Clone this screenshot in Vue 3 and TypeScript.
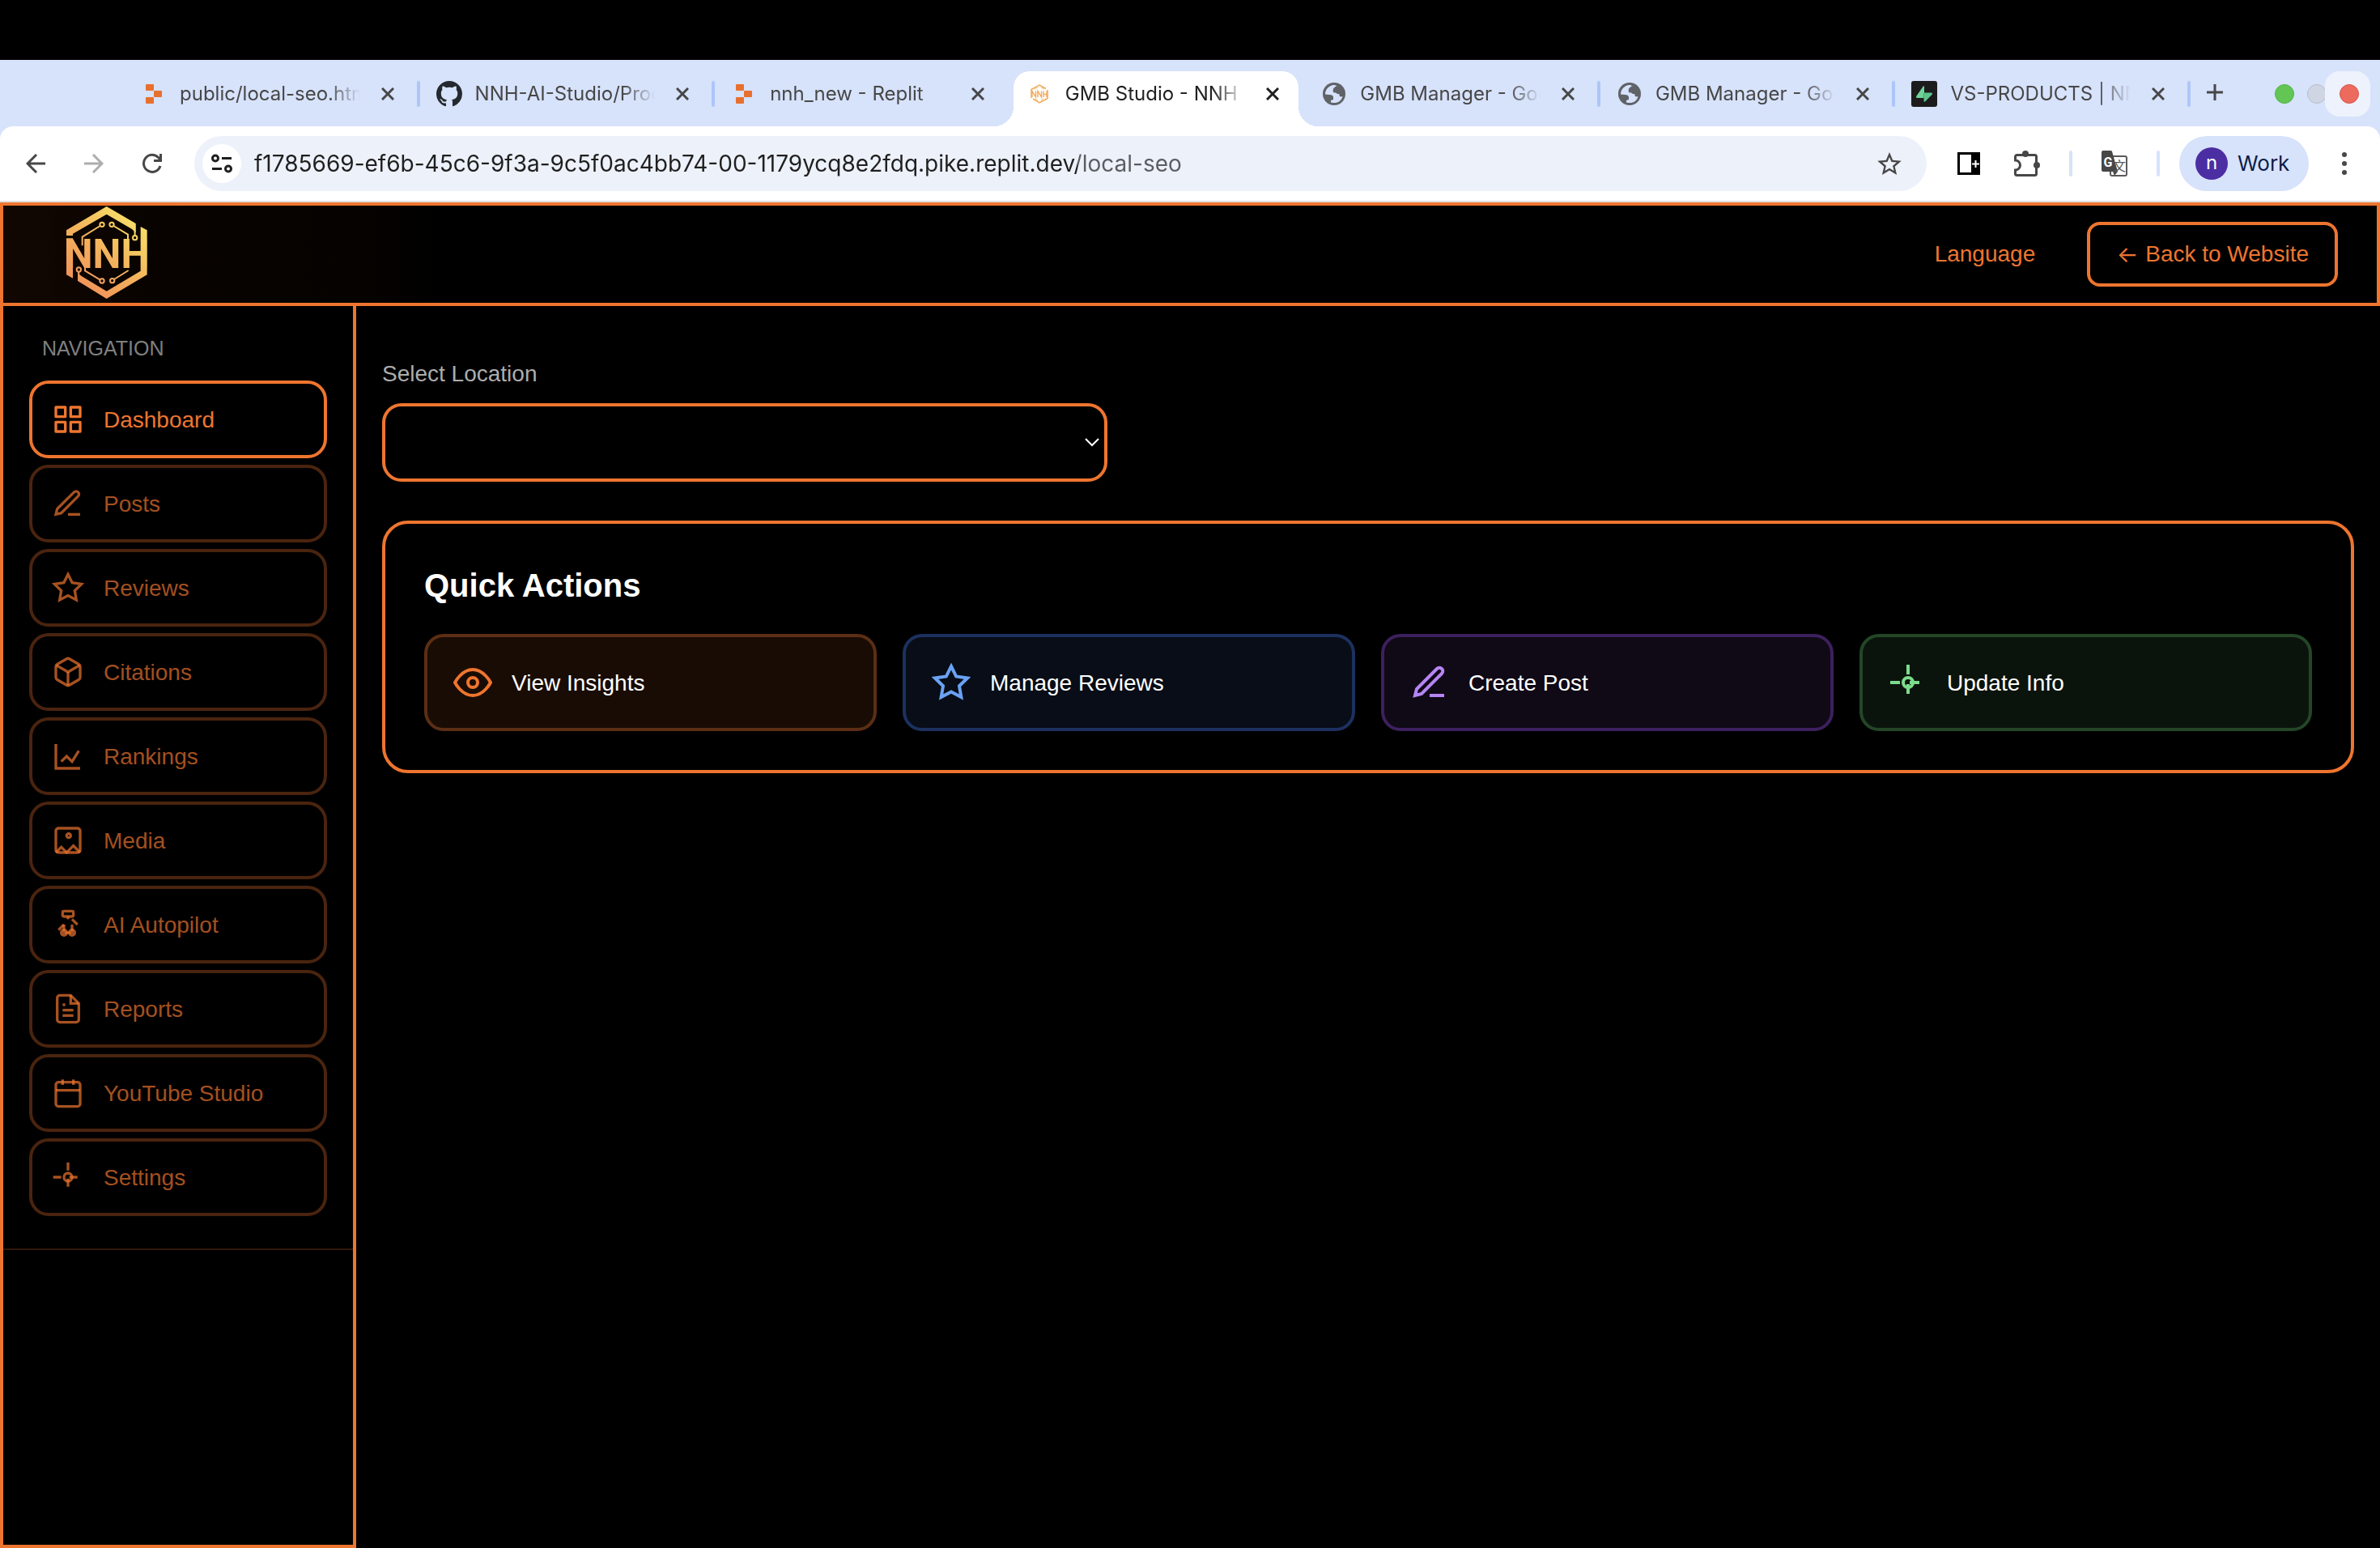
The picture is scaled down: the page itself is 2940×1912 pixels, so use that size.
<script setup lang="ts">
import { ref } from 'vue'

interface Tab {
  title: string
  icon: 'replit' | 'github' | 'nnh' | 'globe' | 'supabase'
  active?: boolean
}

interface NavItem {
  label: string
  paths: string[]
}

interface Action extends NavItem {
  tone: string
}

const tabs: Tab[] = [
  { title: 'public/local-seo.html', icon: 'replit' },
  { title: 'NNH-AI-Studio/Product', icon: 'github' },
  { title: 'nnh_new - Replit', icon: 'replit' },
  { title: 'GMB Studio - NNH Local', icon: 'nnh', active: true },
  { title: 'GMB Manager - Google', icon: 'globe' },
  { title: 'GMB Manager - Google', icon: 'globe' },
  { title: 'VS-PRODUCTS | NNH', icon: 'supabase' },
]

const star = ['M12 2l3.09 6.26L22 9.27l-5 4.87 1.18 6.88L12 17.77l-6.18 3.25L7 14.14 2 9.27l6.91-1.01L12 2z']
const pen = ['M12 20h9', 'M16.5 3.5a2.121 2.121 0 0 1 3 3L7 19l-4 1 1-4L16.5 3.5z']
const target = ['M12 9a3 3 0 1 0 0 6 3 3 0 1 0 0-6z', 'M12 1v6M12 13v6M1 12h6M13 12h6']

const navItems: NavItem[] = [
  {
    label: 'Dashboard',
    paths: ['M3 3h7v7H3z', 'M14 3h7v7h-7z', 'M14 14h7v7h-7z', 'M3 14h7v7H3z'],
  },
  { label: 'Posts', paths: pen },
  { label: 'Reviews', paths: star },
  {
    label: 'Citations',
    paths: [
      'M21 16V8a2 2 0 0 0-1-1.73l-7-4a2 2 0 0 0-2 0l-7 4A2 2 0 0 0 3 8v8a2 2 0 0 0 1 1.73l7 4a2 2 0 0 0 2 0l7-4A2 2 0 0 0 21 16z',
      'M3.27 6.96L12 12.01l8.73-5.05',
      'M12 22.08V12',
    ],
  },
  { label: 'Rankings', paths: ['M3 3v18h18', 'M7 16l4-4 4 4 5-8'] },
  {
    label: 'Media',
    paths: [
      'M5 3h14a2 2 0 0 1 2 2v14a2 2 0 0 1-2 2H5a2 2 0 0 1-2-2V5a2 2 0 0 1 2-2z',
      'M12.5 7a1.5 1.5 0 1 0 0 3 1.5 1.5 0 1 0 0-3z',
      'M21 21l-5-5-5 5-4-4-4 4',
    ],
  },
  {
    label: 'AI Autopilot',
    paths: [
      'M9 2h6a1 1 0 0 1 1 1v2a1 1 0 0 1-1 1H9a1 1 0 0 1-1-1V3a1 1 0 0 1 1-1z',
      'M12 6v2',
      'M15 8l4 4',
      'M9 12l-4 4',
      'M9 16a2 2 0 1 0 0 4 2 2 0 1 0 0-4z',
      'M15 16a2 2 0 1 0 0 4 2 2 0 1 0 0-4z',
      'M9 12v5M15 12v5',
      'M8 18h8',
    ],
  },
  {
    label: 'Reports',
    paths: [
      'M14 2H6a2 2 0 0 0-2 2v16a2 2 0 0 0 2 2h12a2 2 0 0 0 2-2V8z',
      'M14 2v6h6',
      'M16 13H8',
      'M16 17H8',
      'M10 9H8',
    ],
  },
  {
    label: 'YouTube Studio',
    paths: [
      'M5 4h14a2 2 0 0 1 2 2v14a2 2 0 0 1-2 2H5a2 2 0 0 1-2-2V6a2 2 0 0 1 2-2z',
      'M16 2v4',
      'M8 2v4',
      'M3 10h18',
    ],
  },
  { label: 'Settings', paths: target },
]

const actions: Action[] = [
  {
    label: 'View Insights',
    tone: 'orange',
    paths: ['M1 12s4-8 11-8 11 8 11 8-4 8-11 8-11-8-11-8z', 'M12 9a3 3 0 1 0 0 6 3 3 0 1 0 0-6z'],
  },
  { label: 'Manage Reviews', tone: 'blue', paths: star },
  { label: 'Create Post', tone: 'purple', paths: pen },
  { label: 'Update Info', tone: 'green', paths: target },
]

const current = ref('Dashboard')
const location = ref('')
const address = ref('f1785669-ef6b-45c6-9f3a-9c5f0ac4bb74-00-1179ycq8e2fdq.pike.replit.dev/local-seo')
</script>

<template>
  <div class="screen">
    <div class="notch-bar"></div>

    <div class="tab-strip">
      <div class="tabs">
        <div
          v-for="(tab, i) in tabs"
          :key="i"
          class="tab"
          :class="{ active: tab.active, divided: !tab.active && !tabs[i + 1]?.active }"
        >
          <span class="favicon">
            <svg v-if="tab.icon === 'replit'" width="20" height="24" viewBox="0 0 20 24" fill="#e8702f">
              <rect width="10" height="8" rx="1" />
              <rect x="10" y="8" width="10" height="8" rx="1" />
              <rect y="16" width="10" height="8" rx="1" />
            </svg>
            <svg v-else-if="tab.icon === 'github'" width="32" height="32" viewBox="0 0 16 16" fill="#24292f">
              <path
                d="M8 0C3.58 0 0 3.58 0 8c0 3.54 2.29 6.53 5.47 7.59.4.07.55-.17.55-.38 0-.19-.01-.82-.01-1.49-2.01.37-2.53-.49-2.69-.94-.09-.23-.48-.94-.82-1.13-.28-.15-.68-.52-.01-.53.63-.01 1.08.58 1.23.82.72 1.21 1.87.87 2.33.66.07-.52.28-.87.51-1.07-1.78-.2-3.64-.89-3.64-3.95 0-.87.31-1.59.82-2.15-.08-.2-.36-1.02.08-2.12 0 0 .67-.21 2.2.82.64-.18 1.32-.27 2-.27s1.36.09 2 .27c1.53-1.04 2.2-.82 2.2-.82.44 1.1.16 1.92.08 2.12.51.56.82 1.27.82 2.15 0 3.07-1.87 3.75-3.65 3.95.29.25.54.73.54 1.48 0 1.07-.01 1.93-.01 2.2 0 .21.15.46.55.38A8.01 8.01 0 0 0 16 8c0-4.42-3.58-8-8-8z"
              />
            </svg>
            <svg v-else-if="tab.icon === 'nnh'" width="22" height="24" viewBox="0 0 22 24" fill="none" stroke="#f2a95a">
              <path d="M1 8V6.500L11 1l8 4.500M21 7v10.500L11 23l-8-5M1 8v9" stroke-width="1.500" />
              <path d="M5 6l4-2M13 4l4 2M6 18l3 2M13 20l3-2" stroke="#f4c25c" />
              <path d="M2 16V8.500L6.500 16V8.500M9 16V8.500l4.500 7.500V8.500M16 16V8.500M16 12.500h4M20 16V8.500" stroke-width="1.400" />
            </svg>
            <svg v-else-if="tab.icon === 'globe'" width="28" height="28" viewBox="0 0 28 28">
              <circle cx="14" cy="14" r="14" fill="#5f6368" />
              <path
                d="M13 3C7 4 3 9 3 14.500L8 15c3 0 5 1 5 3v3l-3 1v2.500c7 2 13-1 14.500-7.500-2 1-4 .5-4-1.500s-1-3-3-3h-3c-2 0-2.500-3-.5-4h2.500c1.500 0 1-3 2.500-3.500C16 3 14.500 2.800 13 3z"
                fill="#d6e2fb"
              />
              <path d="M17 4c-2 2-5 3-4 6 3 0 3 3 5 4h7c0-5-4-9-8-10z" fill="#5f6368" />
            </svg>
            <svg v-else width="32" height="32" viewBox="0 0 32 32">
              <rect width="32" height="32" rx="3" fill="#1c1c1c" />
              <path d="M16 7v8.500h-.5v5.500H7.500c-1.500 0-2-1.200-1.200-2.200L14.800 6.600c.5-.6 1.200-.4 1.200.4z" fill="#6fd397" />
              <path d="M15.500 14.500h9c1.500 0 2 1.200 1.200 2.200L17 25.500c-.6.6-1.500.3-1.500-.5z" fill="#5cc48a" />
            </svg>
          </span>
          <span class="tab-title">{{ tab.title }}</span>
          <button class="tab-close" type="button" aria-label="Close tab">
            <svg width="16" height="16" viewBox="0 0 16 16" fill="none" stroke="currentColor" stroke-width="3">
              <path d="M1 1l14 14M15 1L1 15" />
            </svg>
          </button>
        </div>
      </div>
      <button class="new-tab" type="button" aria-label="New tab">
        <svg width="20" height="20" viewBox="0 0 20 20" stroke="#474747" stroke-width="3">
          <path d="M10 0v20M0 10h20" />
        </svg>
      </button>
      <div class="window-buttons">
        <button class="light green" type="button" aria-label="Zoom"></button>
        <button class="light grey" type="button" aria-label="Minimize"></button>
        <span class="light-hover">
          <button class="light red" type="button" aria-label="Close"></button>
        </span>
      </div>
    </div>

    <div class="toolbar-wrap">
      <div class="toolbar">
        <button class="tool" type="button" aria-label="Back">
          <svg width="24" height="24" viewBox="0 0 24 24" fill="none" stroke="#474747" stroke-width="3">
            <path d="M24 12H2M13 1L2 12l11 11" />
          </svg>
        </button>
        <button class="tool" type="button" aria-label="Forward">
          <svg width="24" height="24" viewBox="0 0 24 24" fill="none" stroke="#adadad" stroke-width="3">
            <path d="M0 12h22M11 1l11 11-11 11" />
          </svg>
        </button>
        <button class="tool" type="button" aria-label="Reload">
          <svg width="26" height="26" viewBox="0 0 26 26" fill="none" stroke="#474747" stroke-width="3">
            <path d="M23 16a10.500 10.500 0 1 1-2.500-10.500L23 8M23.500 1v8.500H15" />
          </svg>
        </button>
        <div class="omnibox">
          <button class="site-info" type="button" aria-label="Site information">
            <svg width="26" height="24" viewBox="0 0 26 24" fill="none" stroke="#1f1f1f" stroke-width="3">
              <circle cx="5" cy="5.500" r="3.500" />
              <path d="M13 5.500h12M1 18.500h12" />
              <circle cx="21" cy="18.500" r="3.500" />
            </svg>
          </button>
          <input v-model="address" class="address" type="text" aria-label="Address" spellcheck="false" />
          <button class="tool bookmark" type="button" aria-label="Bookmark">
            <svg width="30" height="28" viewBox="2 2 20 19" fill="#474747">
              <path
                d="M22 9.240l-7.190-.62L12 2 9.190 8.630 2 9.240l5.460 4.730L5.820 21 12 17.270 18.180 21l-1.630-7.030L22 9.240zM12 15.400l-3.760 2.270 1-4.280-3.320-2.880 4.380-.38L12 6.100l1.710 4.040 4.380.38-3.320 2.880 1 4.280L12 15.400z"
              />
            </svg>
          </button>
        </div>
        <div class="extensions">
          <button class="tool" type="button" aria-label="Side panel">
            <svg width="28" height="28" viewBox="0 0 28 28">
              <rect width="28" height="28" fill="#000" />
              <rect x="3" y="3" width="14" height="22" fill="#fff" />
              <path d="M22.500 10v9M18 14.500h9" stroke="#fff" stroke-width="2" />
            </svg>
          </button>
          <button class="tool" type="button" aria-label="Extensions">
            <svg width="32" height="32" viewBox="0 0 32 32">
              <path
                d="M1.500 12V7.500a2 2 0 0 1 2-2h22a2 2 0 0 1 2 2v21a2 2 0 0 1-2 2h-22a2 2 0 0 1-2-2V24a6 6 0 0 0 0-12z"
                fill="none"
                stroke="#474747"
                stroke-width="3"
              />
              <circle cx="14" cy="4" r="4" fill="#474747" />
              <circle cx="28" cy="18" r="4" fill="#474747" />
            </svg>
          </button>
          <span class="rule"></span>
          <button class="tool" type="button" aria-label="Translate">
            <svg width="34" height="34" viewBox="0 0 34 34">
              <rect x="12" y="8" width="20" height="24" rx="2" fill="#fff" stroke="#5a5a5a" stroke-width="2" />
              <path d="M3 1h9a2 2 0 0 1 2 1l7 25-4 5-2-5H3a2 2 0 0 1-2-2V3a2 2 0 0 1 2-2z" fill="#474747" />
              <text x="9" y="21" class="glyph-g" text-anchor="middle">G</text>
              <text x="23" y="26" class="glyph-han" text-anchor="middle">文</text>
            </svg>
          </button>
          <span class="rule"></span>
        </div>
        <button class="profile" type="button">
          <span class="avatar">n</span>
          <span>Work</span>
        </button>
        <button class="tool kebab" type="button" aria-label="Menu">
          <svg width="6" height="28" viewBox="0 0 6 28" fill="#474747">
            <circle cx="3" cy="3" r="3" />
            <circle cx="3" cy="14" r="3" />
            <circle cx="3" cy="25" r="3" />
          </svg>
        </button>
      </div>
    </div>

    <header class="site-header">
      <a class="logo" href="#" aria-label="NNH home">
        <svg width="100" height="120" viewBox="66 27 300 360">
          <defs>
            <linearGradient id="gold" gradientUnits="userSpaceOnUse" x1="110" y1="340" x2="330" y2="70">
              <stop offset="0" stop-color="#f0905a" />
              <stop offset="0.500" stop-color="#f3b45c" />
              <stop offset="1" stop-color="#f8e268" />
            </linearGradient>
          </defs>
          <g fill="url(#gold)">
            <path d="M66 138v-20L215 30l108 63v34l-15-14-93-54L90 131v7z" />
            <path d="M341 105l24 13v165l-150 89-107-66v-30l14 12 93 56 126-75z" />
            <path d="M66 148h24v148l-24-13z" />
            <text x="216" y="258" class="logo-text" text-anchor="middle">NNH</text>
          </g>
          <g fill="none" stroke="url(#gold)" stroke-width="6">
            <circle cx="198" cy="97" r="8" />
            <circle cx="234" cy="97" r="8" />
            <circle cx="320" cy="146" r="8" />
            <circle cx="112" cy="264" r="8" />
            <circle cx="198" cy="306" r="8" />
            <circle cx="236" cy="305" r="8" />
            <path d="M191 102l-66 41v32M241 102l53 32v18M319 95l1 43M112 272l-1 20M191 302l-56-34v-12M243 300l53-33" />
          </g>
        </svg>
      </a>
      <div class="header-actions">
        <button class="language" type="button">Language</button>
        <a class="back" href="#"><span class="arrow">←</span> Back to Website</a>
      </div>
    </header>

    <div class="body">
      <aside class="sidebar">
        <nav class="nav" aria-label="Navigation">
          <h2 class="nav-title">NAVIGATION</h2>
          <a
            v-for="item in navItems"
            :key="item.label"
            href="#"
            class="nav-item"
            :class="{ current: item.label === current }"
            @click.prevent="current = item.label"
          >
            <svg class="nav-icon" viewBox="0 0 24 24" fill="none" stroke="currentColor" stroke-width="2">
              <path
                v-for="d in item.paths"
                :key="d"
                :d="d"
                :stroke-linejoin="item.label === 'Dashboard' ? 'round' : 'miter'"
              />
            </svg>
            <span class="label">{{ item.label }}</span>
          </a>
        </nav>
      </aside>

      <main class="main">
        <label class="field-label" for="location">Select Location</label>
        <div class="select-box">
          <select id="location" v-model="location"></select>
          <svg class="chevron" width="18" height="12" viewBox="0 0 18 12" fill="none" stroke="#fff" stroke-width="2">
            <path d="M1 1l8 8 8-8" />
          </svg>
        </div>

        <section class="card">
          <h1>Quick Actions</h1>
          <div class="actions">
            <button v-for="a in actions" :key="a.label" type="button" class="action" :class="a.tone">
              <svg class="action-icon" viewBox="0 0 24 24" fill="none" stroke="currentColor" stroke-width="2">
                <path v-for="d in a.paths" :key="d" :d="d" />
              </svg>
              <span class="label">{{ a.label }}</span>
            </button>
          </div>
        </section>
      </main>
    </div>
  </div>
</template>

<style>
body {
  background: #000;
}
</style>

<style scoped>
.screen {
  --orange: #ee752f;
  display: flex;
  flex-direction: column;
  min-height: 100vh;
  background: #000;
  color: #fff;
  font-family: 'Liberation Sans', Arial, sans-serif;
  font-size: 28px;
  line-height: 40px;
}

.screen *,
.screen *::before,
.screen *::after {
  box-sizing: border-box;
}

svg {
  display: block;
  flex: none;
}

button,
select,
input {
  margin: 0;
  padding: 0;
  border: 0;
  background: none;
  color: inherit;
  font: inherit;
}

a {
  color: inherit;
  text-decoration: none;
}

.notch-bar {
  height: 74px;
}

/* Browser tabs */
.tab-strip {
  display: flex;
  height: 82px;
  padding: 14px 12px 0 152px;
  background: #d7e2fb;
  color: #474747;
  font-family: Inter, sans-serif;
  font-size: 24px;
  line-height: 32px;
}

.tabs {
  display: flex;
  flex: 1;
  min-width: 0;
}

.tab {
  position: relative;
  display: flex;
  flex: 1;
  align-items: center;
  min-width: 0;
  height: 68px;
  margin: 0 6px;
  padding: 0 16px 12px;
}

.tab.divided::after {
  position: absolute;
  top: 12px;
  right: -8px;
  width: 4px;
  height: 32px;
  border-radius: 2px;
  background: #adc6f8;
  content: '';
}

.tab.active {
  border-radius: 20px 20px 0 0;
  background: #fff;
  color: #1f1f1f;
}

.tab.active::before,
.tab.active::after {
  position: absolute;
  bottom: 0;
  width: 24px;
  height: 24px;
  content: '';
}

.tab.active::before {
  left: -24px;
  background: radial-gradient(circle at 0 0, transparent 24px, #fff 24px);
}

.tab.active::after {
  right: -24px;
  background: radial-gradient(circle at 100% 0, transparent 24px, #fff 24px);
}

.favicon {
  display: flex;
  flex: none;
  align-items: center;
  justify-content: center;
  width: 32px;
  height: 32px;
  margin-right: 16px;
}

.tab-title {
  flex: 1;
  min-width: 0;
  overflow: hidden;
  margin-right: 18px;
  white-space: nowrap;
  -webkit-mask-image: linear-gradient(to right, #000 calc(100% - 40px), transparent);
  mask-image: linear-gradient(to right, #000 calc(100% - 40px), transparent);
}

.tab-close {
  display: flex;
  flex: none;
  align-items: center;
  justify-content: center;
  width: 32px;
  height: 32px;
}

.new-tab {
  display: flex;
  align-items: center;
  justify-content: center;
  width: 64px;
  height: 52px;
}

.window-buttons {
  display: flex;
  align-items: center;
  gap: 16px;
  height: 56px;
  padding-left: 42px;
}

.light {
  width: 24px;
  height: 24px;
  border: 1px solid;
  border-radius: 50%;
}

.light.green {
  border-color: #53b346;
  background: #62c554;
}

.light.grey {
  border-color: #b7bdcc;
  background: #cfd5e3;
}

.light.red {
  border-color: #d9584d;
  background: #ed6a5e;
}

.light-hover {
  display: flex;
  align-items: center;
  justify-content: center;
  width: 56px;
  height: 56px;
  margin-left: -18px;
  padding-left: 4px;
  border-radius: 18px;
  background: #edf2fc;
}

/* Browser toolbar */
.toolbar-wrap {
  background: #d7e2fb;
}

.toolbar {
  display: flex;
  align-items: center;
  height: 94px;
  padding: 0 8px;
  border-bottom: 2px solid #dfe0e0;
  border-radius: 16px 16px 0 0;
  background: #fff;
  font-family: Inter, sans-serif;
}

.tool {
  display: flex;
  flex: none;
  align-items: center;
  justify-content: center;
  width: 72px;
  height: 56px;
}

.omnibox {
  display: flex;
  flex: 1;
  align-items: center;
  min-width: 0;
  height: 68px;
  margin-left: 16px;
  padding-left: 10px;
  border-radius: 34px;
  background: #edf1fa;
}

.site-info {
  display: flex;
  flex: none;
  align-items: center;
  justify-content: center;
  width: 48px;
  height: 48px;
  border-radius: 50%;
  background: #fff;
}

.address {
  flex: 1;
  min-width: 0;
  height: 48px;
  margin-left: 16px;
  outline: 0;
  background: linear-gradient(to right, #1f1f1f 1017px, #5a5c60 1017px);
  -webkit-background-clip: text;
  background-clip: text;
  color: transparent;
  font-size: 28px;
}

.bookmark {
  width: 92px;
}

.extensions {
  display: flex;
  align-items: center;
  margin-left: 16px;
}

.rule {
  width: 4px;
  height: 32px;
  margin: 0 16px;
  border-radius: 2px;
  background: #d7e2fb;
}

.profile {
  display: flex;
  align-items: center;
  gap: 12px;
  width: 160px;
  height: 68px;
  margin: 0 8px;
  padding-left: 20px;
  border-radius: 34px;
  background: #d7e2fb;
  color: #0b1d4a;
  font-size: 26px;
}

.avatar {
  width: 40px;
  height: 40px;
  border-radius: 50%;
  background: #4c2ea3;
  color: #fff;
  font-size: 24px;
  line-height: 38px;
  text-align: center;
}

.glyph-g {
  fill: #fff;
  font: bold 16px Roboto, sans-serif;
}

.glyph-han {
  fill: #5a5a5a;
  font: 16px 'Noto Sans CJK SC', sans-serif;
}

/* Site header */
.site-header {
  display: flex;
  align-items: center;
  justify-content: space-between;
  height: 128px;
  padding: 0 48px 0 78px;
  border: 4px solid var(--orange);
  background: linear-gradient(to right, #120702, #080300 200px, #050200 460px, #000 540px);
  color: var(--orange);
}

.logo-text {
  font: bold 148px Roboto, sans-serif;
}

.header-actions {
  display: flex;
  align-items: center;
  gap: 64px;
}

.back {
  display: flex;
  gap: 8px;
  padding: 16px 32px;
  border: 4px solid var(--orange);
  border-radius: 16px;
}

.arrow {
  width: 28px;
  font-family: Inter, sans-serif;
  text-align: center;
}

.label {
  padding-top: 2px;
}

/* Sidebar */
.body {
  display: flex;
  flex: 1;
}

.sidebar {
  flex: none;
  width: 440px;
  border: 4px solid var(--orange);
  border-top: 0;
}

.nav {
  display: flex;
  flex-direction: column;
  gap: 8px;
  padding: 34px 32px 40px;
  border-bottom: 2px solid #301709;
}

.nav-title {
  margin: 0 0 14px;
  padding-left: 16px;
  color: #808080;
  font-size: 25px;
  font-weight: normal;
  line-height: 36px;
}

.nav-item {
  display: flex;
  align-items: center;
  gap: 24px;
  height: 96px;
  padding: 0 24px;
  border: 4px solid #4a240f;
  border-radius: 24px;
  color: rgba(238, 117, 47, 0.7);
}

.nav-item.current {
  border-color: var(--orange);
  color: var(--orange);
}

.nav-icon {
  width: 40px;
  height: 40px;
}

/* Main panel */
.main {
  flex: 1;
  min-width: 0;
  padding: 64px 32px;
}

.field-label {
  display: block;
  margin-bottom: 16px;
  color: #adadad;
}

.select-box {
  position: relative;
  max-width: 896px;
  margin-bottom: 48px;
}

.select-box select {
  display: block;
  width: 100%;
  height: 97px;
  padding: 0 32px;
  border: 4px solid var(--orange);
  border-radius: 24px;
  background: #000;
  appearance: none;
}

.chevron {
  position: absolute;
  top: 43px;
  right: 10px;
  pointer-events: none;
}

.card {
  padding: 48px;
  border: 4px solid var(--orange);
  border-radius: 32px;
}

.card h1 {
  margin: 0 0 32px;
  font-size: 40px;
  line-height: 56px;
}

.actions {
  display: grid;
  grid-template-columns: repeat(4, 1fr);
  gap: 32px;
}

.action {
  display: flex;
  align-items: center;
  gap: 24px;
  height: 120px;
  padding: 0 32px;
  border: 4px solid;
  border-radius: 24px;
}

.action-icon {
  width: 48px;
  height: 48px;
}

.action .label {
  color: #fff;
}

.action.orange {
  border-color: #5c2e14;
  background: #190c04;
}

.action.blue {
  border-color: #1d3160;
  background: #080d17;
}

.action.purple {
  border-color: #3d205e;
  background: #100916;
}

.action.green {
  border-color: #244627;
  background: #0b140c;
}

.orange .action-icon {
  color: var(--orange);
}

.blue .action-icon {
  color: #6aa2f4;
}

.purple .action-icon {
  color: #b585f4;
}

.green .action-icon {
  color: #7bdc8b;
}
</style>
